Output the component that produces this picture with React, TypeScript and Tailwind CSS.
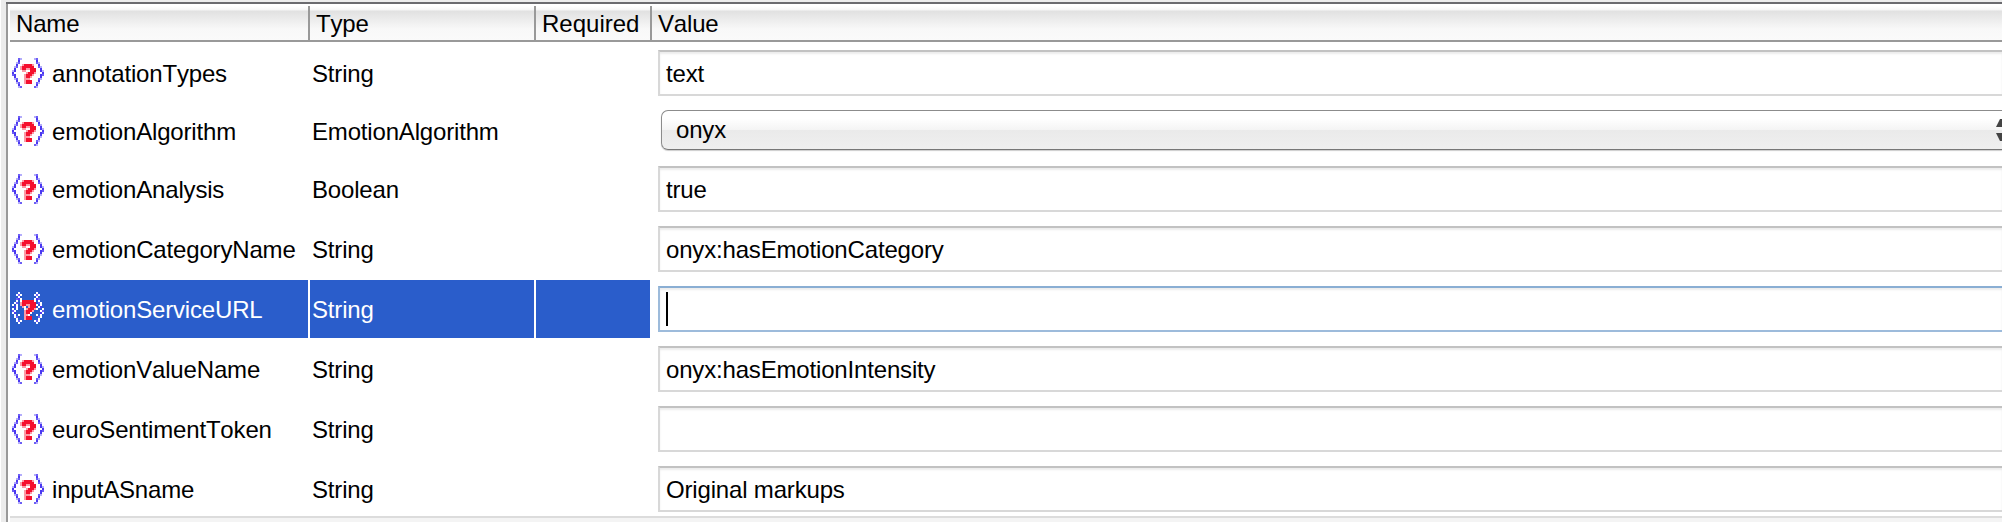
import { ReactNode } from 'react';

type Row = { name: string; type: string; value: string; kind?: 'select' | 'focus'; size: string };

const rows: Row[] = [
  { name: 'annotationTypes', type: 'String', value: 'text', size: 'h-[60px] pb-[2px]' },
  { name: 'emotionAlgorithm', type: 'EmotionAlgorithm', value: 'onyx', kind: 'select', size: 'h-[56px] pb-[2px]' },
  { name: 'emotionAnalysis', type: 'Boolean', value: 'true', size: 'h-[60px] pb-[2px]' },
  { name: 'emotionCategoryName', type: 'String', value: 'onyx:hasEmotionCategory', size: 'h-[60px] pb-[2px]' },
  { name: 'emotionServiceURL', type: 'String', value: '', kind: 'focus', size: 'h-[60px] pb-[2px]' },
  { name: 'emotionValueName', type: 'String', value: 'onyx:hasEmotionIntensity', size: 'h-[60px] pb-[2px]' },
  { name: 'euroSentimentToken', type: 'String', value: '', size: 'h-[60px] pb-[2px]' },
  { name: 'inputASname', type: 'String', value: 'Original markups', size: 'h-[58px] -mb-[2px]' },
];

// b = bracket, m = mid bracket, l = light bracket, r = red, p = pink, w = white
const normal = [
  '................',
  '...ml......lm...',
  '...b........b...',
  '..lm........ml..',
  '..b..prrrrp..b..',
  '.lm.prrrrrr..ml.',
  '.b..prrpprrr..b.',
  'lb...pp..rrr..bl',
  'b......prrrp...b',
  'mb....prrrp...bm',
  '.b....prrp....b.',
  '.lm...ppp....ml.',
  '..b...prrr...b..',
  '..lm..prrr..ml..',
  '...b........b...',
  '...lm......ml...',
];
const selected = [
  '...w........w...',
  '..wmw......wmw..',
  '...w........w...',
  '..mbw......wbm..',
  '..w.wrrrrrrw.w..',
  '.wm.prrrrrrr.mw.',
  'w.w.prrpprrrw.w.',
  '.bw..pw.prrr.wb.',
  'w.w...wprrrpw..w',
  'mw....prrrp...wm',
  'wb....prrw....bw',
  '.w.w..ppw...w.w.',
  '.wm...prrr...mw.',
  '..w...prrr...w..',
  '..wmw......wmw..',
  '...w........w...',
];
const tint: Record<string, string> = {
  b: '#4a38f0',
  m: '#6c5df5',
  l: '#b3acfb',
  r: '#f5102e',
  p: '#fb9aa6',
  w: '#ffffff',
};

function ParamIcon({ active }: { active: boolean }) {
  const bitmap = active ? selected : normal;
  return (
    <svg width="32" height="32" viewBox="0 0 16 16" shapeRendering="crispEdges" className="mb-[2px] shrink-0">
      {bitmap.flatMap((line, y) =>
        line.split('').map((c, x) => (c === '.' ? null : <rect key={`${x}-${y}`} x={x} y={y} width="1" height="1" fill={tint[c]} />)),
      )}
    </svg>
  );
}

function Head({ children, className }: { children: ReactNode; className: string }) {
  return <div className={`h-[34px] leading-[36px] ${className}`}>{children}</div>;
}

export default function App() {
  return (
    <div className="flex h-[522px] w-[2002px] overflow-hidden bg-white pl-px text-[24px] tracking-[-0.17px] text-black [font-family:'Liberation_Sans',Arial,sans-serif] [font-kerning:none]">
      <div className="w-[5px] shrink-0 bg-[#ececec]" />
      <div className="flex min-w-0 grow flex-col">
        <div className="h-[2px] shrink-0 bg-[#ececec]" />
        <div className="h-[2px] shrink-0 bg-[#6b6b6f]" />
        <div className="flex grow flex-col border-l-2 border-[#999] pl-[2px] pt-[2px]">
          <div className="flex h-[36px] shrink-0 border-b-2 border-[#999] bg-[linear-gradient(#fff_0px,#f6f6f6_4px,#e1e1e1_5px,#f8f8f8_23px,#fafafa_34px)]">
            <Head className="w-[300px] border-r-2 border-[#999] pl-[6px]">Name</Head>
            <Head className="w-[226px] border-r-2 border-[#999] pl-[6px]">Type</Head>
            <Head className="w-[116px] border-r-2 border-[#999] pl-[6px] tracking-normal">Required</Head>
            <Head className="grow pl-[6px]">Value</Head>
          </div>
          <div className="flex flex-col pt-[2px]">
            {rows.map((r) => {
              const focus = r.kind === 'focus';
              const cell = focus ? 'bg-[#2a5dcb] text-white' : '';
              return (
                <div key={r.name} className={`flex shrink-0 gap-[2px] ${r.size}`}>
                  <div className={`flex w-[298px] items-center gap-[8px] pl-[2px] ${cell}`}>
                    <ParamIcon active={focus} />
                    <span className="pt-[2px]">{r.name}</span>
                  </div>
                  <div className={`flex w-[224px] items-center pl-[2px] pt-[2px] ${cell}`}>{r.type}</div>
                  <div className={`w-[114px] ${cell}`} />
                  <div className="grow pl-[6px] pt-[6px]">
                    {r.kind === 'select' ? (
                      <div className="ml-[3px] flex h-[40px] items-center rounded-l-[7px] border border-r-0 border-[#8c8c8c] border-b-[#777] bg-[linear-gradient(#fff_20%,#f4f4f4_50%,#eaeaea_50%,#efefef)] pl-[14px] shadow-[0_1px_1px_#ccc]">
                        <span className="grow">{r.value}</span>
                        <svg width="6" height="22" viewBox="0 0 6 22" fill="#444">
                          <path d="M4 0H6V8H0ZM0 14H6V22H4Z" />
                        </svg>
                      </div>
                    ) : (
                      <div
                        className={`flex h-[46px] items-center border-2 border-r-0 pl-[6px] ${
                          focus
                            ? 'border-[#9dbbdb] border-t-[#8aaed3] shadow-[inset_0_2px_2px_#ececec]'
                            : 'border-[#d8d8d8] border-t-[#c2c2c2] pt-[2px] shadow-[inset_0_2px_2px_#ececec]'
                        }`}
                      >
                        {focus ? <span className="h-[34px] w-[2px] bg-black" /> : r.value}
                      </div>
                    )}
                  </div>
                </div>
              );
            })}
          </div>
          <div className="h-[2px] shrink-0 bg-[#dcdcdc]" />
          <div className="grow bg-[#f4f4f4]" />
        </div>
      </div>
    </div>
  );
}
